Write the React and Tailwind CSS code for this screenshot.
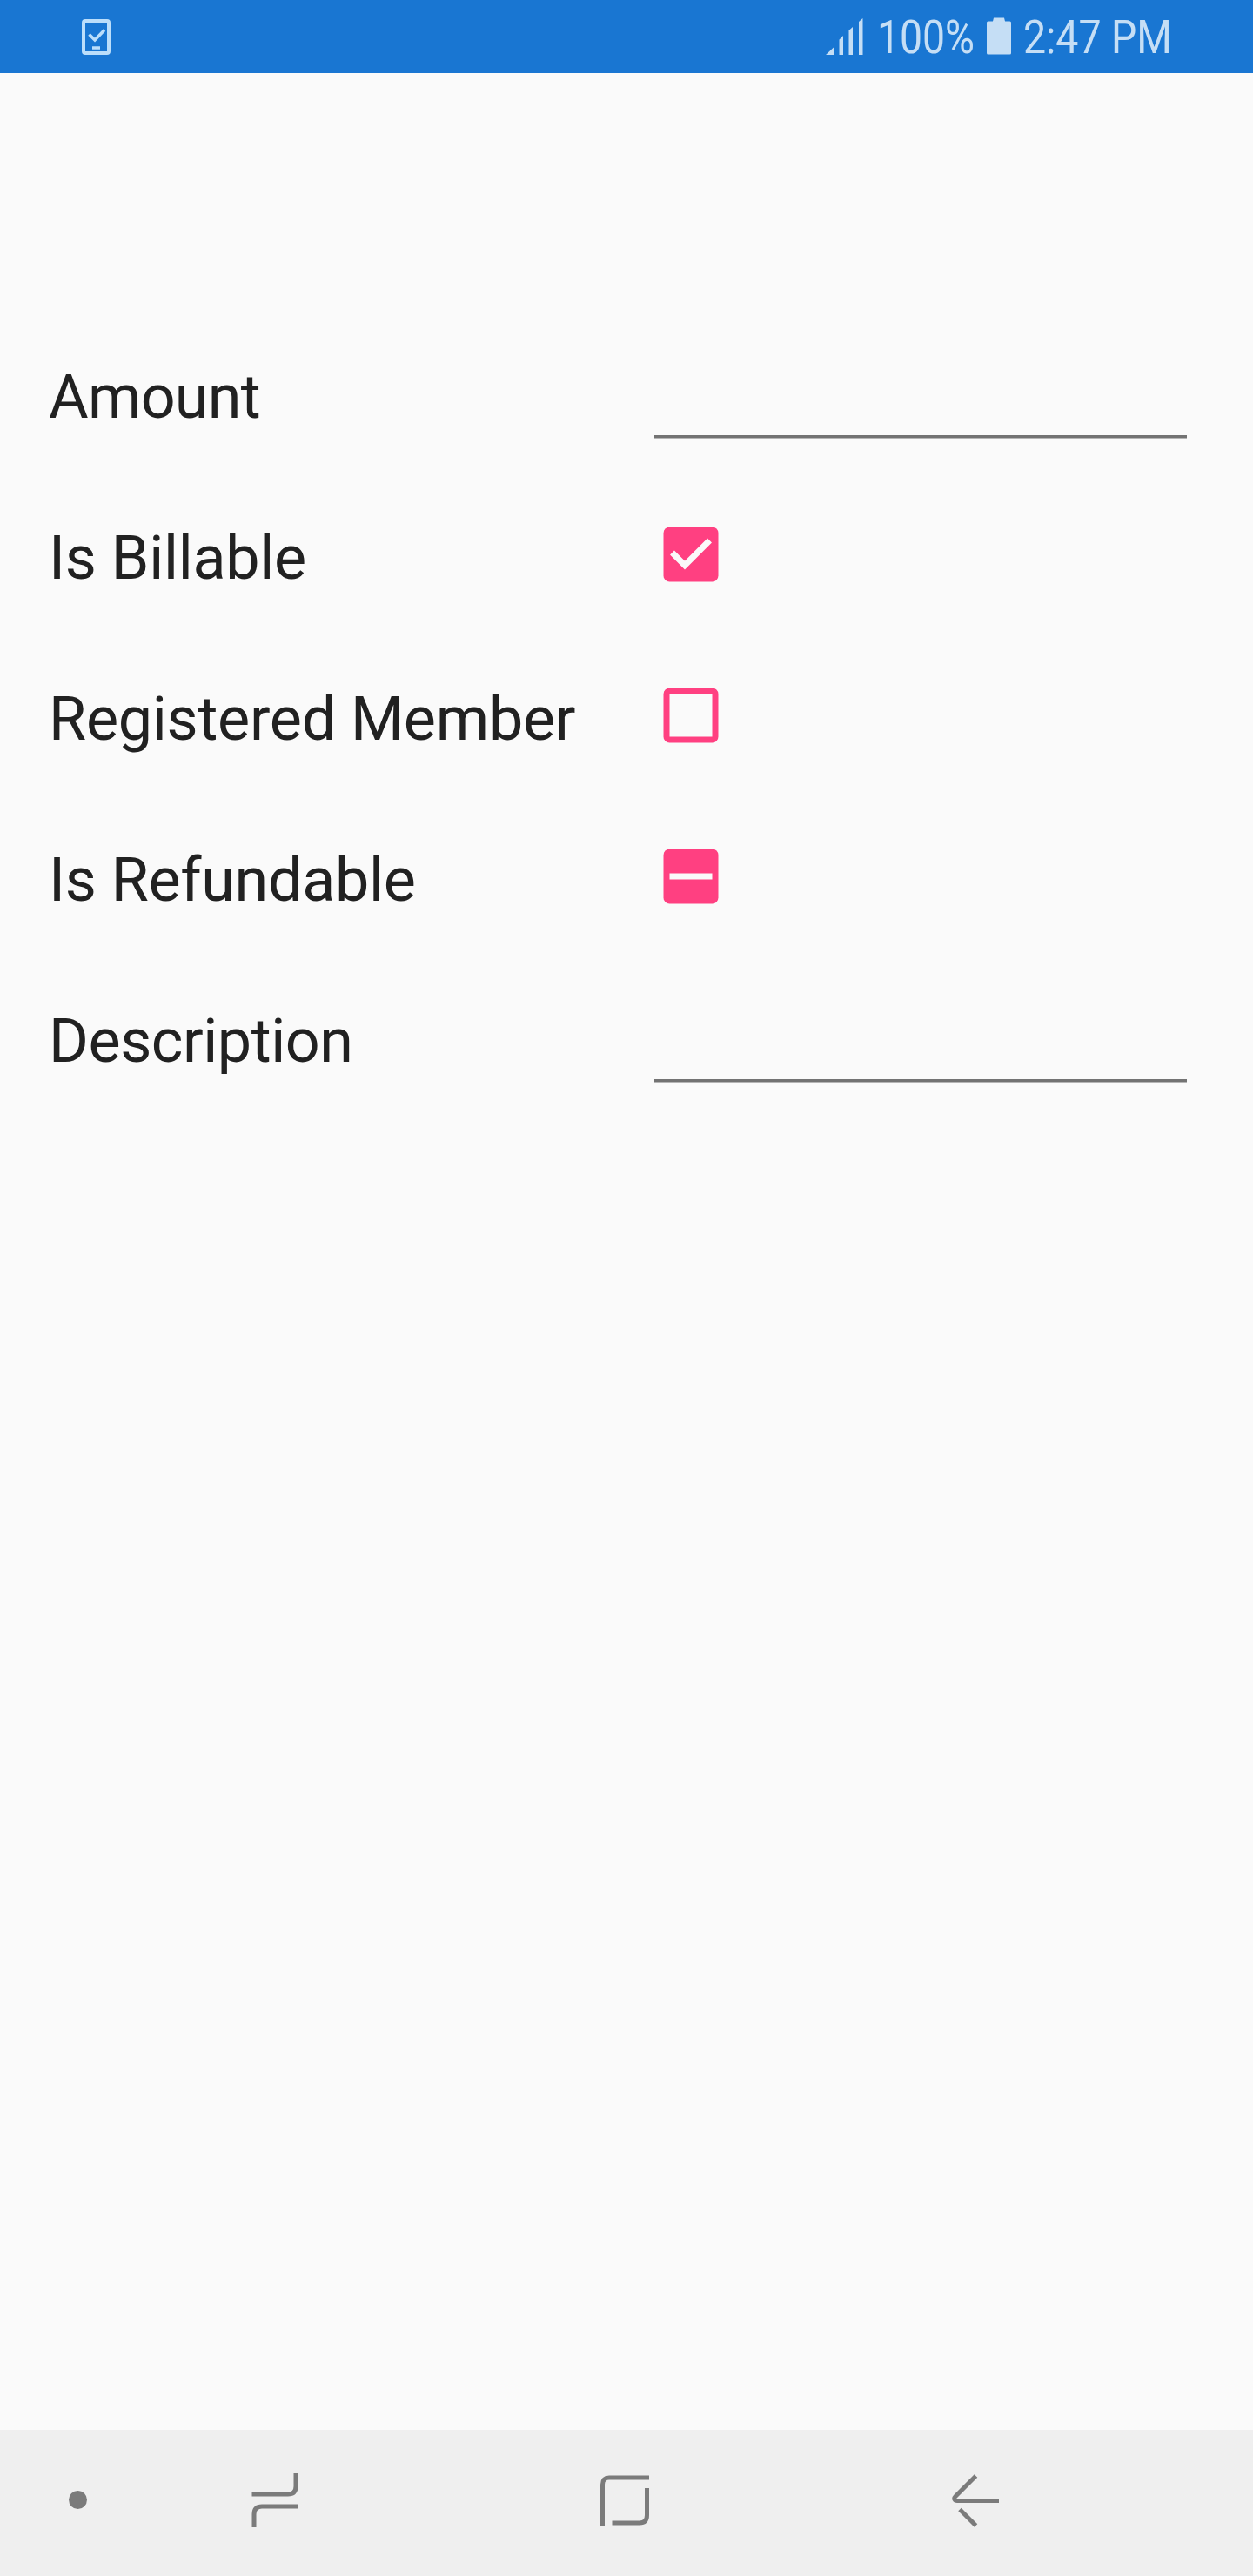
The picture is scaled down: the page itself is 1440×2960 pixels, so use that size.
import React from "react";

const rows = [
  { label: "Amount", kind: "input", tracking: "tracking-[-0.7px]" },
  { label: "Is Billable", kind: "checked", tracking: "tracking-[-0.25px]" },
  { label: "Registered Member", kind: "unchecked", tracking: "tracking-[-0.25px]" },
  { label: "Is Refundable", kind: "mixed", tracking: "tracking-[-0.3px]" },
  { label: "Description", kind: "input", tracking: "tracking-[-0.45px]" },
];

function StatusBar() {
  return (
    <header className="flex h-[83.5px] shrink-0 items-start bg-[#1976d2] text-[#c5def5]">
      <svg className="ml-[94px] mt-[22px] h-[42px] w-[33px]" viewBox="0 0 33 42" fill="none" stroke="#bbdefb">
        <rect x="2" y="2" width="29" height="37" rx="2" strokeWidth="4" />
        <path d="M8.500 17.500L15 24L26 12.500" strokeWidth="3.500" />
        <path d="M12 33H21" strokeWidth="3.500" />
      </svg>
      <svg className="ml-[821px] mt-[21px] h-[42px] w-[44px]" viewBox="0 0 44 42" fill="#c5def5">
        <path d="M1 42L10.500 33V42ZM16.500 24.500L21 20V42H16.500ZM27.500 14L32 10V42H27.500ZM39 4L43.500 0V42H39Z" />
      </svg>
      <span className="mt-3 ml-4 block w-[116px] origin-left scale-x-[0.858] whitespace-nowrap text-[54px] leading-[62px]">100%</span>
      <svg className="ml-[10px] mt-[20px] h-[43px] w-[28px]" viewBox="0 0 28 43" fill="#c5def5">
        <path d="M8 0.500H20L21 4.500H26.500Q28 4.500 28 6V41Q28 42.500 26.500 42.500H1.500Q0 42.500 0 41V6Q0 4.500 1.500 4.500H7Z" />
      </svg>
      <span className="mt-3 ml-[14px] block w-[172px] origin-left scale-x-[0.86] whitespace-nowrap text-[54px] leading-[62px]">2:47 PM</span>
    </header>
  );
}

function CheckBox({ kind }) {
  return (
    <svg className="ml-[10px] mt-[60px] h-16 w-16" viewBox="0 0 64 64" role="checkbox" aria-checked={kind === "mixed" ? "mixed" : kind === "checked"}>
      {kind === "unchecked" ? (
        <rect x="4" y="4" width="56" height="56" rx="3.500" fill="none" stroke="#ff4081" strokeWidth="7" />
      ) : (
        <rect x="0.500" y="0.500" width="63" height="63" rx="7" fill="#ff4081" />
      )}
      {kind === "checked" && <path d="M10.500 30L25 44.500L53.500 16" fill="none" stroke="#fafafa" strokeWidth="7" />}
      {kind === "mixed" && <rect x="7.500" y="28.500" width="49" height="7" fill="#fafafa" />}
    </svg>
  );
}

function FormRow({ label, kind, tracking }) {
  return (
    <div className="flex h-[185px] pl-14">
      <div className={`w-[696px] shrink-0 whitespace-nowrap pt-[55px] text-[70px] leading-[82px] ${tracking}`}>{label}</div>
      {kind === "input" ? (
        <div className="mt-[140px] h-1 w-[612px] border-b border-[#b5b5b5] bg-[#737373]" />
      ) : (
        <CheckBox kind={kind} />
      )}
    </div>
  );
}

function NavBar() {
  return (
    <nav className="flex h-[168px] shrink-0 items-center bg-[#efefef] pb-[7px]">
      <div className="ml-[79px] h-[21px] w-[21px] rounded-full bg-[#7b7b7b]" />
      <svg className="ml-[189px] h-[62px] w-[54px]" viewBox="0 0 54 62" fill="none" stroke="#7b7b7b" strokeWidth="5">
        <path d="M0.500 24H42Q51 24 51 15V0M53.500 38H12Q3 38 3 47V62" />
      </svg>
      <svg className="ml-[347px] h-[58px] w-[56px]" viewBox="0 0 56 58" fill="none" stroke="#7b7b7b" strokeWidth="5">
        <path d="M56 3H10Q2.500 3 2.500 11V58M53.500 15V46Q53.500 55 45 55H13.500" />
      </svg>
      <svg className="ml-[348px] h-[62px] w-[56px]" viewBox="0 0 56 62" fill="none" stroke="#7b7b7b" strokeWidth="5">
        <path d="M27.500 3L4 26.500C1.500 29 3 31.500 6 31.500H54M9 41.500L27.500 60" />
      </svg>
    </nav>
  );
}

export default function App() {
  return (
    <div className="flex h-[2960px] w-[1440px] flex-col overflow-hidden bg-[#fafafa] font-['Roboto',sans-serif] text-[#212121]">
      <StatusBar />
      <main className="flex-1 pt-[276.5px]">
        {rows.map((row) => (
          <FormRow key={row.label} label={row.label} kind={row.kind} tracking={row.tracking} />
        ))}
      </main>
      <NavBar />
    </div>
  );
}
